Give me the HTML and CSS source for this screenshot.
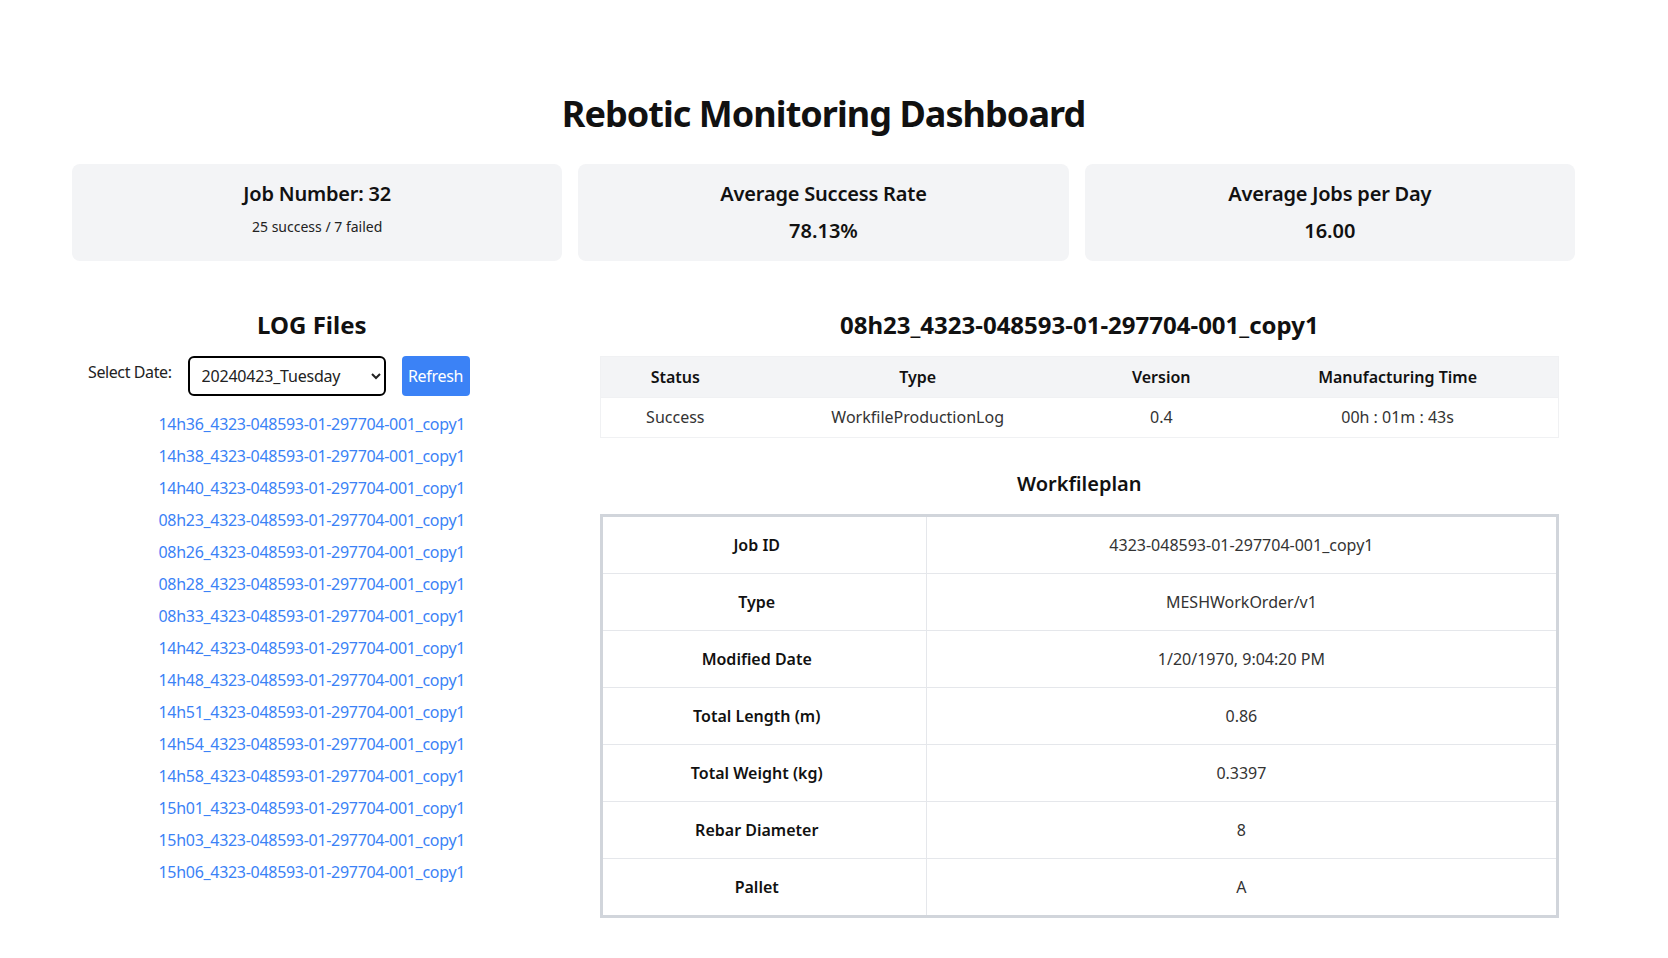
FILE: index.html
```html
<!DOCTYPE html>
<html lang="en">
<head>
<meta charset="utf-8">
<title>Rebotic Monitoring Dashboard</title>
<link rel="stylesheet" href="styles.css">
</head>
<body>
<div class="page">
  <h1 class="title">Rebotic Monitoring Dashboard</h1>
  <div class="stats">
    <div class="card">
      <h3 class="card-title">Job Number: 32</h3>
      <p class="card-sub">25 success / 7 failed</p>
    </div>
    <div class="card">
      <h3 class="card-title">Average Success Rate</h3>
      <p class="card-value">78.13%</p>
    </div>
    <div class="card">
      <h3 class="card-title">Average Jobs per Day</h3>
      <p class="card-value">16.00</p>
    </div>
  </div>
  <div class="main">
    <section class="logs">
      <h2 class="section-title">LOG Files</h2>
      <div class="controls">
        <label class="date-label" for="date">Select Date:</label>
        <select id="date" class="date-select">
          <option>20240423_Tuesday</option>
        </select>
        <button class="refresh">Refresh</button>
      </div>
      <ul class="file-list">
        <li><a href="#">14h36_4323-048593-01-297704-001_copy1</a></li>
        <li><a href="#">14h38_4323-048593-01-297704-001_copy1</a></li>
        <li><a href="#">14h40_4323-048593-01-297704-001_copy1</a></li>
        <li><a href="#">08h23_4323-048593-01-297704-001_copy1</a></li>
        <li><a href="#">08h26_4323-048593-01-297704-001_copy1</a></li>
        <li><a href="#">08h28_4323-048593-01-297704-001_copy1</a></li>
        <li><a href="#">08h33_4323-048593-01-297704-001_copy1</a></li>
        <li><a href="#">14h42_4323-048593-01-297704-001_copy1</a></li>
        <li><a href="#">14h48_4323-048593-01-297704-001_copy1</a></li>
        <li><a href="#">14h51_4323-048593-01-297704-001_copy1</a></li>
        <li><a href="#">14h54_4323-048593-01-297704-001_copy1</a></li>
        <li><a href="#">14h58_4323-048593-01-297704-001_copy1</a></li>
        <li><a href="#">15h01_4323-048593-01-297704-001_copy1</a></li>
        <li><a href="#">15h03_4323-048593-01-297704-001_copy1</a></li>
        <li><a href="#">15h06_4323-048593-01-297704-001_copy1</a></li>
      </ul>
    </section>
    <section class="details">
      <h2 class="section-title">08h23_4323-048593-01-297704-001_copy1</h2>
      <table class="status">
        <colgroup>
          <col class="c1"><col class="c2"><col class="c3"><col class="c4">
        </colgroup>
        <thead>
          <tr><th>Status</th><th>Type</th><th>Version</th><th>Manufacturing Time</th></tr>
        </thead>
        <tbody>
          <tr><td>Success</td><td>WorkfileProductionLog</td><td>0.4</td><td>00h : 01m : 43s</td></tr>
        </tbody>
      </table>
      <h3 class="plan-title">Workfileplan</h3>
      <table class="plan">
        <tbody>
          <tr><td class="key">Job ID</td><td>4323-048593-01-297704-001_copy1</td></tr>
          <tr><td class="key">Type</td><td>MESHWorkOrder/v1</td></tr>
          <tr><td class="key">Modified Date</td><td>1/20/1970, 9:04:20 PM</td></tr>
          <tr><td class="key">Total Length (m)</td><td>0.86</td></tr>
          <tr><td class="key">Total Weight (kg)</td><td>0.3397</td></tr>
          <tr><td class="key">Rebar Diameter</td><td>8</td></tr>
          <tr><td class="key">Pallet</td><td>A</td></tr>
        </tbody>
      </table>
    </section>
  </div>
</div>
</body>
</html>
```
FILE: styles.css
```css
* { box-sizing: border-box; }
body {
  margin: 0;
  background: #fff;
  color: #111;
  font-family: "Noto Sans", "Open Sans", sans-serif;
}
.page {
  width: 1668px;
  padding: 94px 93px 40px 72px;
}
.title {
  margin: 0 0 30px;
  font-size: 36px;
  line-height: 40px;
  font-weight: 700;
  letter-spacing: -0.95px;
  text-align: center;
}
.stats {
  display: grid;
  grid-template-columns: repeat(3, 1fr);
  gap: 16px;
}
.card {
  background: #f3f4f6;
  border-radius: 8px;
  padding: 16px;
  text-align: center;
}
.card-title {
  margin: 0;
  font-size: 20px;
  line-height: 28px;
  font-weight: 600;
  letter-spacing: -0.2px;
}
.card-sub {
  margin: 9px 0 0;
  font-size: 14px;
  line-height: 20px;
  color: #222;
}
.card-value {
  margin: 9px 0 0;
  font-size: 20px;
  line-height: 28px;
  font-weight: 600;
}
.main {
  display: grid;
  grid-template-columns: repeat(3, 1fr);
  gap: 32px;
  margin-top: 48px;
}
.details { grid-column: span 2; padding: 0 16px; }
.section-title {
  margin: 0 0 15px;
  font-size: 24px;
  line-height: 32px;
  font-weight: 700;
  text-align: center;
}
.controls {
  display: flex;
  align-items: flex-start;
  gap: 16px;
  padding-left: 16px;
}
.date-label {
  font-size: 16px;
  line-height: 24px;
  padding-top: 4px;
  letter-spacing: -0.4px;
  color: #222;
}
.date-select {
  width: 198px;
  height: 40px;
  padding: 0 8px;
  border: 2px solid #000;
  border-radius: 6px;
  background: #fff;
  font-family: inherit;
  font-size: 16px;
  letter-spacing: -0.2px;
  color: #222;
}
.refresh {
  width: 68px;
  height: 40px;
  padding: 0;
  border: none;
  border-radius: 4px;
  background: #3b82f6;
  color: #fff;
  font-family: inherit;
  font-size: 16px;
  letter-spacing: -0.3px;
}
.file-list {
  list-style: none;
  margin: 16px 0 0;
  padding: 0;
  text-align: center;
}
.file-list li {
  line-height: 24px;
  margin-bottom: 8px;
  font-size: 16px;
  letter-spacing: -0.3px;
}
.file-list a {
  color: #3b82f6;
  text-decoration: none;
}
.status {
  width: 100%;
  border-collapse: collapse;
  border: 1px solid #f0f1f3;
  font-size: 16px;
}
.status .c1 { width: 150px; }
.status .c2 { width: 336px; }
.status .c3 { width: 152px; }
.status .c4 { width: 322px; }
.status th {
  background: #f3f4f6;
  padding: 8px 16px;
  line-height: 24px;
  font-weight: 600;
  color: #111;
}
.status td {
  padding: 7px 16px 8px;
  line-height: 24px;
  text-align: center;
  color: #333;
  border-top: 1px solid #f0f1f3;
}
.plan-title {
  margin: 32px 0 16px;
  font-size: 20px;
  line-height: 28px;
  font-weight: 600;
  text-align: center;
}
.plan {
  width: 100%;
  border-collapse: collapse;
  border: 3px solid #d1d5db;
  font-size: 16px;
}
.plan td {
  border: 1px solid #e5e7eb;
  padding: 16px;
  line-height: 24px;
  text-align: center;
  color: #333;
}
.plan td.key {
  width: 34%;
  padding: 16px 31px 16px 16px;
  font-weight: 600;
  color: #111;
}
```
